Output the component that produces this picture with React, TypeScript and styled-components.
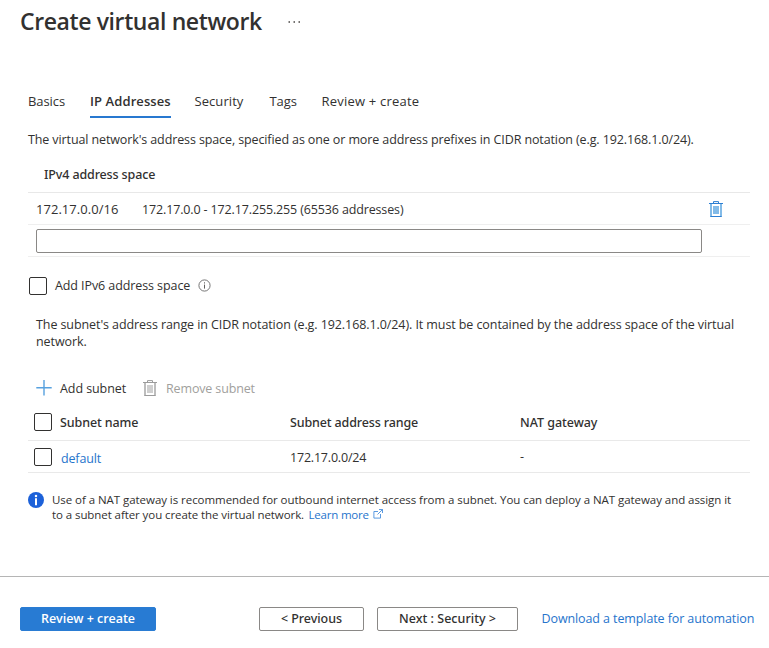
import React from "react";
import styled, { createGlobalStyle, css } from "styled-components";

const GlobalStyle = createGlobalStyle`
  *, *::before, *::after { box-sizing: border-box; }
  body { margin: 0; background: #fff; color: #323130; font: 400 12.5px/17px "Open Sans", "Noto Sans", sans-serif; }
  button, input { font: inherit; color: inherit; margin: 0; }
`;

const mediumText = css`
  font-family: "Noto Sans", "Open Sans", sans-serif;
  font-weight: 500;
`;

const Page = styled.div`
  width: 769px;
  height: 648px;
  display: flex;
  flex-direction: column;
  overflow: hidden;
`;

const Header = styled.header`
  display: flex;
  align-items: center;
  gap: 27px;
  height: 44px;
  padding-left: 20px;
`;

const Title = styled.h1`
  margin: 0;
  padding-bottom: 2px;
  width: 241px;
  font-size: 23px;
  font-weight: 600;
  line-height: 32px;
  letter-spacing: -0.39px;
  white-space: nowrap;
`;

const Label = styled.span<{ $track?: number }>`
  letter-spacing: ${(p) => p.$track ?? 0}px;
  white-space: nowrap;
`;

const TabList = styled.nav`
  display: flex;
  height: 32px;
  margin: 42px 0 0 28px;
`;

const Tab = styled.a<{ $width: number; $gap: number; $active?: boolean; $track: number }>`
  width: ${(p) => p.$width}px;
  margin-right: ${(p) => p.$gap}px;
  border-bottom: 2px solid ${(p) => (p.$active ? "#2878d0" : "transparent")};
  font-size: 13px;
  line-height: 31px;
  font-weight: ${(p) => (p.$active ? 600 : 400)};
  letter-spacing: ${(p) => p.$track}px;
  white-space: nowrap;
`;

const Intro = styled.p`
  margin: 13px 0 0 28px;
  letter-spacing: -0.113px;
  white-space: nowrap;
`;

const AddressSpace = styled.section`
  width: 722px;
  margin: 8px 0 0 28px;
`;

const SpaceHeading = styled.div`
  height: 37px;
  padding-left: 16px;
  line-height: 37px;
  ${mediumText}
  letter-spacing: -0.13px;
  border-bottom: 1px solid #e8e8e8;
`;

const SpaceRow = styled.div`
  display: flex;
  align-items: center;
  height: 32px;
  padding: 0 27px 0 8px;
  border-bottom: 1px solid #efefef;
`;

const Prefix = styled.span`
  width: 106px;
  padding-top: 2px;
  font-size: 13px;
  letter-spacing: 0.04px;
`;

const RangeText = styled.span`
  flex: 1;
  padding-top: 2px;
  letter-spacing: -0.14px;
`;

const InputRow = styled.div`
  display: flex;
  height: 32px;
  padding: 4px 0 0 8px;
  border-bottom: 1px solid #efefef;
`;

const PrefixInput = styled.input`
  width: 666px;
  height: 24px;
  border: 1px solid #8a8886;
  border-radius: 2px;
  background: #fff;
`;

const Checkbox = styled.span`
  flex: none;
  width: 18px;
  height: 18px;
  border: 1px solid #323130;
  border-radius: 2px;
`;

const Ipv6Option = styled.label`
  display: flex;
  align-items: center;
  height: 18px;
  margin: 20px 0 0 29px;
  gap: 8px;
`;

const Ipv6Text = styled.span`
  display: flex;
  align-items: center;
  gap: 8px;
  padding-bottom: 2px;
  letter-spacing: -0.09px;
`;

const SubnetNote = styled.p`
  margin: 21px 0 0 36px;
  width: 720px;
  letter-spacing: -0.084px;
`;

const Toolbar = styled.div`
  display: flex;
  align-items: center;
  height: 20px;
  margin: 28px 0 0 36px;
`;

const ToolButton = styled.button<{ $width: number; $gap: number; $muted?: boolean }>`
  display: flex;
  align-items: center;
  gap: ${(p) => p.$gap}px;
  width: ${(p) => p.$width}px;
  padding: 0;
  border: 0;
  background: none;
  color: ${(p) => (p.$muted ? "#a19f9d" : "#323130")};
`;

const SubnetTable = styled.section`
  width: 722px;
  margin: 6px 0 0 28px;
`;

const SubnetRow = styled.div<{ $head?: boolean }>`
  display: grid;
  grid-template-columns: 26px 230px 230px 1fr;
  align-items: center;
  height: ${(p) => (p.$head ? 37 : 32)}px;
  padding-left: 6px;
  border-bottom: 1px solid #e9e9e9;
  ${(p) => p.$head && mediumText}
`;

const Link = styled.a<{ $track?: number }>`
  color: #2674cc;
  letter-spacing: ${(p) => p.$track ?? 0}px;
  white-space: nowrap;
`;

const DefaultLink = styled(Link)`
  padding: 3px 0 0 1px;
`;

const RangeCell = styled(Label)`
  padding-top: 2px;
`;

const Notice = styled.aside`
  display: flex;
  gap: 8px;
  margin: 19px 0 0 28px;
  font-size: 11.5px;
  line-height: 15px;
`;

const NoticeLine = styled.div`
  display: flex;
  align-items: center;
  height: 15px;
`;

const LearnMore = styled(Link)`
  display: inline-flex;
  align-items: flex-start;
  gap: 4.5px;
  margin-left: 4.5px;
`;

const Footer = styled.footer`
  display: flex;
  height: 72px;
  margin-top: auto;
  padding: 30px 0 0 20px;
  border-top: 1px solid #b5b5b5;
`;

const Button = styled.button<{ $width: number; $gap: number; $primary?: boolean }>`
  display: flex;
  align-items: center;
  justify-content: center;
  width: ${(p) => p.$width}px;
  height: 24px;
  margin-right: ${(p) => p.$gap}px;
  padding: 0 0 1px;
  border: 1px solid ${(p) => (p.$primary ? "#2a7cd3" : "#8a8886")};
  border-radius: 2px;
  background: ${(p) => (p.$primary ? "#287bd3" : "#fff")};
  color: ${(p) => (p.$primary ? "#fff" : "#323130")};
  font-weight: 600;
  ${(p) => !p.$primary && mediumText}
`;

const DownloadLink = styled(Link)`
  line-height: 23px;
`;

const Icon = styled.svg`
  display: block;
  flex: none;
`;

const TrashIcon = ({ muted = false }: { muted?: boolean }) => {
  const line = muted ? "#9b9b9b" : "#2d7fd3";
  const side = muted ? "#bdbdbd" : "#83bbe8";
  const fill = muted ? "#cfcfcf" : "#83bbe8";
  return (
    <Icon width="14" height="16" viewBox="0 0 14 16" fill="none">
      <path d="M4.5 2V.6h5V2" stroke={line} />
      <path d="M0 2.5h14" stroke={line} />
      <path d="M2 3v12M12 3v12" stroke={side} strokeWidth="2" />
      <path d="M1.2 15.5h11.6" stroke={line} />
      <path d="M4 5h6v8H4z" fill={fill} />
    </Icon>
  );
};

const PlusIcon = () => (
  <Icon width="16" height="16" viewBox="0 0 16 16">
    <path d="M8 0v15.5M.3 7.7h15.4" stroke="#57a1df" strokeWidth="1.4" />
  </Icon>
);

const HelpIcon = () => (
  <Icon width="13" height="13" viewBox="0 0 13 13" fill="none">
    <circle cx="6.5" cy="6.5" r="5.6" stroke="#666" strokeWidth=".9" />
    <path d="M6.5 5.6v4M6.5 3.3v1.2" stroke="#605e5c" />
  </Icon>
);

const InfoIcon = () => (
  <Icon width="16" height="16" viewBox="0 0 16 16">
    <circle cx="8" cy="8" r="8" fill="#1c61d9" />
    <circle cx="8" cy="4" r="1.25" fill="#fff" />
    <path d="M8 6.3v7" stroke="#fff" strokeWidth="2" />
  </Icon>
);

const ExternalIcon = () => (
  <Icon width="10" height="12" viewBox="0 0 10 12" fill="none" stroke="#4a90dc" strokeWidth=".9">
    <path d="M5 4.5H.9v6.6h6.6V7M6 2.5h3.5V6M9.5 2.5l-5 5" />
  </Icon>
);

const MoreIcon = () => (
  <Icon width="12" height="2" viewBox="0 0 12 2" fill="#484644">
    <path d="M.5 .3H2v1.4H.5zM5.5 .3H7v1.4H5.5zM10.5 .3H12v1.4h-1.5z" />
  </Icon>
);

const tabs = [
  { name: "Basics", width: 37, gap: 25, track: -0.08 },
  { name: "IP Addresses", width: 81, gap: 23.5, track: 0.09, active: true },
  { name: "Security", width: 49, gap: 26, track: 0.07 },
  { name: "Tags", width: 27, gap: 25, track: -0.1 },
  { name: "Review + create", width: 98, gap: 0, track: 0.21 },
];

export default function App() {
  return (
    <Page>
      <GlobalStyle />
      <Header>
        <Title>Create virtual network</Title>
        <MoreIcon />
      </Header>
      <TabList>
        {tabs.map((t) => (
          <Tab key={t.name} $width={t.width} $gap={t.gap} $track={t.track} $active={t.active}>
            {t.name}
          </Tab>
        ))}
      </TabList>
      <Intro>
        The virtual network's address space, specified as one or more address prefixes in CIDR notation (e.g.
        192.168.1.0/24).
      </Intro>
      <AddressSpace>
        <SpaceHeading>IPv4 address space</SpaceHeading>
        <SpaceRow>
          <Prefix>172.17.0.0/16</Prefix>
          <RangeText>172.17.0.0 - 172.17.255.255 (65536 addresses)</RangeText>
          <TrashIcon />
        </SpaceRow>
        <InputRow>
          <PrefixInput aria-label="Address prefix" />
        </InputRow>
      </AddressSpace>
      <Ipv6Option>
        <Checkbox />
        <Ipv6Text>
          Add IPv6 address space <HelpIcon />
        </Ipv6Text>
      </Ipv6Option>
      <SubnetNote>
        The subnet's address range in CIDR notation (e.g. 192.168.1.0/24). It must be contained by the address space of
        the virtual network.
      </SubnetNote>
      <Toolbar>
        <ToolButton $width={107} $gap={8}>
          <PlusIcon />
          <Label $track={-0.08}>Add subnet</Label>
        </ToolButton>
        <ToolButton $width={120} $gap={9} $muted>
          <TrashIcon muted />
          <Label $track={-0.14}>Remove subnet</Label>
        </ToolButton>
      </Toolbar>
      <SubnetTable>
        <SubnetRow $head>
          <Checkbox />
          <Label $track={-0.1}>Subnet name</Label>
          <Label $track={-0.13}>Subnet address range</Label>
          <Label $track={-0.03}>NAT gateway</Label>
        </SubnetRow>
        <SubnetRow>
          <Checkbox />
          <DefaultLink $track={-0.15}>default</DefaultLink>
          <RangeCell $track={-0.2}>172.17.0.0/24</RangeCell>
          <Label>-</Label>
        </SubnetRow>
      </SubnetTable>
      <Notice>
        <InfoIcon />
        <div>
          <NoticeLine>
            <Label $track={-0.052}>
              Use of a NAT gateway is recommended for outbound internet access from a subnet. You can deploy a NAT
              gateway and assign it
            </Label>
          </NoticeLine>
          <NoticeLine>
            <Label $track={-0.08}>to a subnet after you create the virtual network.</Label>
            <LearnMore $track={-0.2}>
              Learn more <ExternalIcon />
            </LearnMore>
          </NoticeLine>
        </div>
      </Notice>
      <Footer>
        <Button $width={136} $gap={103} $primary>
          <Label $track={-0.04}>Review + create</Label>
        </Button>
        <Button $width={105} $gap={13}>
          <Label $track={-0.04}>&lt; Previous</Label>
        </Button>
        <Button $width={141} $gap={23.5}>
          <Label $track={0.03}>Next : Security &gt;</Label>
        </Button>
        <DownloadLink $track={-0.1}>Download a template for automation</DownloadLink>
      </Footer>
    </Page>
  );
}
